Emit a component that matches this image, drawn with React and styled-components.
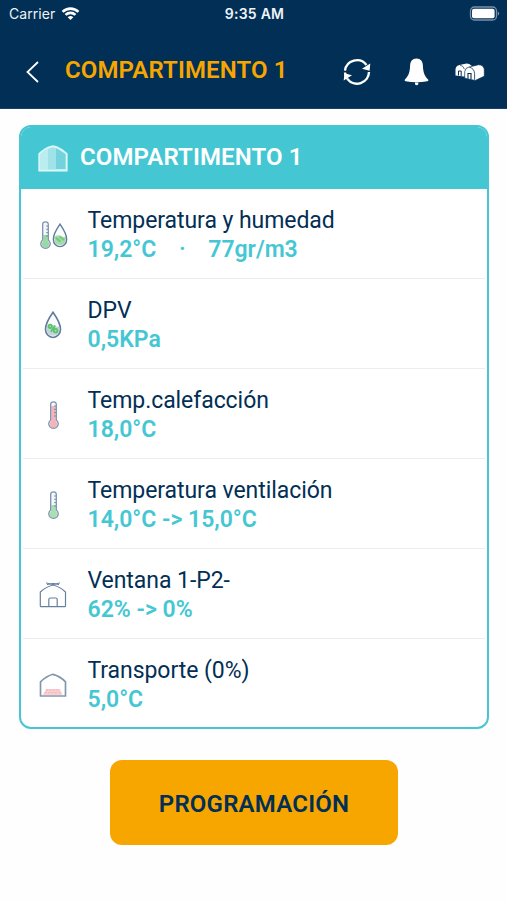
import React from "react";
import styled, { createGlobalStyle } from "styled-components";

const NAVY = "#022f55";
const TEAL = "#45c7d3";
const AMBER = "#f7a600";
const OUTLINE = "#66809f";

const GlobalStyle = createGlobalStyle`
  * { box-sizing: border-box; }
  body { margin: 0; background: #fff; font-family: Roboto, sans-serif; color: ${NAVY}; }
  svg { display: block; flex: none; }
`;

const Screen = styled.div`
  width: 507px;
  height: 900px;
  overflow: hidden;
  background: #fefefe;
`;

const TopBar = styled.header`
  height: 109px;
  background: ${NAVY};
  border-bottom: 1px solid #17406a;
`;

const StatusBar = styled.div`
  height: 28px;
  padding: 0 7px 0 9px;
  display: grid;
  grid-template-columns: 1fr auto 1fr;
  align-items: center;
  color: #eef3f8;
  font: 400 14px/28px Inter, sans-serif;
`;

const Carrier = styled.div`
  display: flex;
  align-items: center;
  gap: 6px;
  letter-spacing: 0.05px;
`;

const Clock = styled.div`
  font-weight: 600;
  font-size: 14px;
  letter-spacing: 0.25px;
`;

const Battery = styled.div`
  justify-self: end;
  margin-top: -2px;
`;

const NavBar = styled.nav`
  display: flex;
  align-items: center;
  height: 80px;
  padding: 8px 22px 0 25px;
`;

const NavTitle = styled.h1`
  flex: 1;
  margin: 0 0 0 25px;
  padding-bottom: 5px;
  color: ${AMBER};
  font-size: 24px;
  font-weight: 600;
  line-height: 30px;
  letter-spacing: 0.12px;
  white-space: nowrap;
`;

const Actions = styled.div`
  display: flex;
  align-items: center;
`;

const Action = styled.span`
  margin-left: ${(p) => p.$gap}px;
`;

const Card = styled.section`
  width: 470px;
  height: 604px;
  margin: 16px 0 0 19px;
  border: 2px solid ${TEAL};
  border-radius: 12px;
  overflow: hidden;
  background: #fff;
`;

const CardHeader = styled.div`
  display: flex;
  align-items: center;
  gap: 12px;
  height: 62px;
  padding-left: 17px;
  background: ${TEAL};
`;

const CardTitle = styled.h2`
  margin: 0;
  padding-bottom: 2px;
  color: #fff;
  font-size: 24px;
  font-weight: 600;
  line-height: 30px;
  letter-spacing: 0.12px;
  white-space: nowrap;
`;

const Row = styled.div`
  display: flex;
  height: 90px;
  margin: 0 2px;
  border-bottom: 1px solid #ebeeef;
  &:last-child { border-bottom: 0; }
`;

const IconCell = styled.div`
  display: flex;
  align-items: center;
  justify-content: center;
  width: 60px;
  padding-top: 3px;
`;

const RowText = styled.div`
  padding: 17px 0 0 4.5px;
`;

const Label = styled.div`
  font-size: 23px;
  line-height: 29px;
  letter-spacing: -0.06px;
  white-space: nowrap;
`;

const Value = styled.div`
  display: flex;
  color: ${TEAL};
  font-size: 23px;
  font-weight: 600;
  line-height: 30px;
  white-space: pre;
`;

const Separator = styled.span`
  width: 52px;
  text-align: center;
`;

const ProgramButton = styled.button`
  display: block;
  width: 288px;
  height: 85px;
  margin: 31px 0 0 110px;
  padding: 3px 0 0;
  border: 0;
  border-radius: 12px;
  background: ${AMBER};
  color: ${NAVY};
  font: 600 24px/30px Roboto, sans-serif;
  letter-spacing: 0.2px;
`;

const WifiIcon = () => (
  <svg width="19" height="14" viewBox="0 0 19 15" fill="none" stroke="#fff" strokeWidth="2.8">
    <path d="M1 5.2 C5.8.6 13.2.6 18 5.2" />
    <path d="M4.2 8.5 C7.2 5.6 11.8 5.6 14.8 8.5" />
    <path d="M9.5 14 L6.5 11 Q9.5 8.5 12.5 11Z" fill="#fff" stroke="none" />
  </svg>
);

const BatteryIcon = () => (
  <svg width="31" height="15" viewBox="0 0 31 15">
    <rect x="1.5" y="1" width="26" height="13" rx="3.8" fill="none" stroke="#7890a8" strokeWidth="1.3" />
    <rect x="3" y="2.7" width="22.6" height="9.6" rx="2" fill="#fff" />
    <path d="M28.8 5.2 Q31.5 7.5 28.8 9.8Z" fill="#8296ad" />
  </svg>
);

const BackIcon = () => (
  <svg width="15" height="22" viewBox="0 0 15 22" fill="none" stroke="#fff" strokeWidth="1.8">
    <path d="M13 1 L2.5 11 L13 21" />
  </svg>
);

const SyncIcon = () => (
  <svg width="28" height="28" viewBox="0 0 28 28">
    <g fill="none" stroke="#fff" strokeWidth="2.4">
      <path d="M2 12.7 A12 12 0 0 1 23.5 7" />
      <path d="M26 14 A12 12 0 0 1 4.5 21" />
      <path d="M2 14.5 A12 12 0 0 0 4.5 21" />
    </g>
    <path d="M27.3 5.5 L26.6 12.8 L19 10.8Z M.7 22.5 L1.4 15.2 L9 17.2Z" fill="#fff" />
  </svg>
);

const BellIcon = () => (
  <svg width="25" height="28" viewBox="0 0 25 28" fill="#fff">
    <path d="M12.5.5 C16.8.5 18.7 3.4 18.9 7.5 C19.2 14.5 20.3 17.5 24.3 21.7 Q24.8 23 23.4 23.3 Q12.5 25.2 1.6 23.3 Q.2 23 .7 21.7 C4.7 17.5 5.8 14.5 6.1 7.5 C6.3 3.4 8.2.5 12.5.5Z" />
    <path d="M11 24.5 H14.3 V26.2 Q12.7 28.3 11 26.2Z" />
  </svg>
);

const VillageIcon = () => (
  <svg width="30" height="18" viewBox="0 0 30 18">
    <path d="M.5 12.5 V6 Q1.2 2.4 4.5 2 L11.5.5 Q15 .5 16 2.5 L20 4 V11 L9 13.5Z" fill="#fff" />
    <path d="M5 2.2 Q8.2 2.6 9.5 6.2" fill="none" stroke={NAVY} strokeWidth=".7" />
    <path d="M3.5 12.5 V8 H6.2 V13" fill="none" stroke={NAVY} strokeWidth="1" />
    <path d="M9.7 15.2 V8.5 Q10.5 4.4 14 4.1 L23.5 1.7 Q28.2 1.8 29.3 6 V13.2 L20.2 17.5Z" fill="#fff" stroke={NAVY} strokeWidth=".7" />
    <path d="M14.4 4.2 Q19.3 5.5 19.6 10.5 V16.8" fill="none" stroke={NAVY} strokeWidth=".8" />
    <path d="M13 15.7 V10.5 H16 V16.2" fill="none" stroke={NAVY} strokeWidth="1.1" />
  </svg>
);

const ShedIcon = () => (
  <svg width="30" height="27" viewBox="0 0 30 27">
    <path d="M.5 26.5 V8.5 Q7 2 14 .5 L18 .8 Q24 3 29.5 8.5 V26.5Z" fill="#b9edf0" />
    <path d="M10 4 L14.5 2.3 L19 4 V24.6 H10Z" fill="#9fe2e7" />
    <path d="M18 3 L27.5 9 V24 H18Z" fill="#73d2db" />
    <path d="M1.2 25.5 V8.8 Q8 2.5 14.8 1.2 Q22 2.6 28.7 8.8 V25.5Z" fill="none" stroke="#d8f7f8" strokeWidth="1.4" />
  </svg>
);

const Thermometer = ({ fill, level = 14 }) => (
  <svg width="11" height="29" viewBox="0 0 11 29">
    <path d="M2.7 19 V3.6 Q2.7 .8 5.5 .8 Q8.3 .8 8.3 3.6 V19 A4.7 4.7 0 1 1 2.7 19Z" fill="#f5f8fa" />
    <path d={`M3.3 ${level} H7.7 V20 A3.7 3.7 0 1 1 3.3 20Z`} fill={fill} />
    <path d="M2.7 19 V3.6 Q2.7 .8 5.5 .8 Q8.3 .8 8.3 3.6 V19 A4.7 4.7 0 1 1 2.7 19Z" fill="none" stroke="#7c93ac" strokeWidth="1.3" />
    <path d="M6 5 H8 M6 8.3 H8 M6 11.6 H8 M6 15 H8" stroke={OUTLINE} strokeWidth=".8" />
  </svg>
);

const Drop = ({ percent }) => (
  <svg width={percent ? 18 : 16} height={percent ? 28 : 25} viewBox="0 0 17 27" preserveAspectRatio="none">
    <path d="M8.5 1.2 Q15.6 11.5 15.6 17.7 A7.1 7.8 0 0 1 1.4 17.7 Q1.4 11.5 8.5 1.2Z" fill="#fbfcfd" />
    <path d="M2.7 14.7 Q7 12 9.5 14 T14.5 14.5 V19 A6 6 0 0 1 2.7 19Z" fill={percent ? "#c6d4dd" : "#a5d9ae"} />
    {percent ? (
      <g fill="none" stroke="#54c763" strokeWidth="1.7">
        <circle cx="5.8" cy="14.8" r="1.6" />
        <circle cx="11" cy="19" r="1.7" />
        <path d="M10.5 14 L6.5 20" />
      </g>
    ) : (
      <path d="M4 16 L9 20 M8 14.5 L13 18.5" stroke="#6fca7c" strokeWidth="2" />
    )}
    <path d="M8.5 1.2 Q15.6 11.5 15.6 17.7 A7.1 7.8 0 0 1 1.4 17.7 Q1.4 11.5 8.5 1.2Z" fill="none" stroke="#607b9b" strokeWidth="1.5" />
  </svg>
);

const Pair = styled.div`
  display: flex;
  align-items: center;
  gap: 1px;
  padding-left: 1px;
`;

const VentIcon = () => (
  <svg width="28" height="26" viewBox="0 0 28 26" fill="none" stroke={OUTLINE} strokeWidth="1.2">
    <path d="M1.3 24 V10 Q7 4.8 14 3 Q21 4.8 26.5 10 V24 Q26.5 24.7 25.8 24.7 H2 Q1.3 24.7 1.3 24Z" />
    <path d="M9.8 24 V17.5 Q9.8 16 11.3 16 H16.7 Q18.2 16 18.2 17.5 V24" />
    <path d="M7 .9 L14 2.6 L21 .9 M8 2.6 L14 1.4 L20 2.6" strokeWidth="1" />
  </svg>
);

const TransportIcon = () => (
  <svg width="28" height="25" viewBox="0 0 28 25">
    <path d="M7 16 H21 L23.5 22 H4Z" fill="#fbd0d3" />
    <path d="M7 17 H21 M5.5 19.8 H22.5" stroke="#f7b0b5" strokeWidth="1" strokeDasharray="2.4 1" />
    <path d="M1.5 23 V8.8 Q7.5 3 14 1.3 Q21 3 26.5 8.8 V23 H1.5Z" fill="none" stroke="#8297ae" strokeWidth="1.7" strokeLinejoin="round" />
  </svg>
);

const rows = [
  {
    label: "Temperatura y humedad",
    value: <>19,2°C<Separator>·</Separator>77gr/m3</>,
    icon: <Pair><Thermometer fill="#98dba2" /><Drop /></Pair>,
  },
  { label: "DPV", value: "0,5KPa", icon: <Drop percent /> },
  { label: "Temp.calefacción", value: "18,0°C", icon: <Thermometer fill="#f7b3b7" level={5} /> },
  { label: "Temperatura ventilación", value: "14,0°C -> 15,0°C", icon: <Thermometer fill="#a9e0b0" /> },
  { label: "Ventana 1-P2-", value: "62% -> 0%", icon: <VentIcon /> },
  { label: "Transporte (0%)", value: "5,0°C", icon: <TransportIcon /> },
];

export default function App() {
  return (
    <Screen>
      <GlobalStyle />
      <TopBar>
        <StatusBar>
          <Carrier>Carrier<WifiIcon /></Carrier>
          <Clock>9:35 AM</Clock>
          <Battery><BatteryIcon /></Battery>
        </StatusBar>
        <NavBar>
          <BackIcon />
          <NavTitle>COMPARTIMENTO 1</NavTitle>
          <Actions>
            <Action $gap={0}><SyncIcon /></Action>
            <Action $gap={33}><BellIcon /></Action>
            <Action $gap={26}><VillageIcon /></Action>
          </Actions>
        </NavBar>
      </TopBar>
      <Card>
        <CardHeader>
          <ShedIcon />
          <CardTitle>COMPARTIMENTO 1</CardTitle>
        </CardHeader>
        {rows.map((row) => (
          <Row key={row.label}>
            <IconCell>{row.icon}</IconCell>
            <RowText>
              <Label>{row.label}</Label>
              <Value>{row.value}</Value>
            </RowText>
          </Row>
        ))}
      </Card>
      <ProgramButton>PROGRAMACIÓN</ProgramButton>
    </Screen>
  );
}
